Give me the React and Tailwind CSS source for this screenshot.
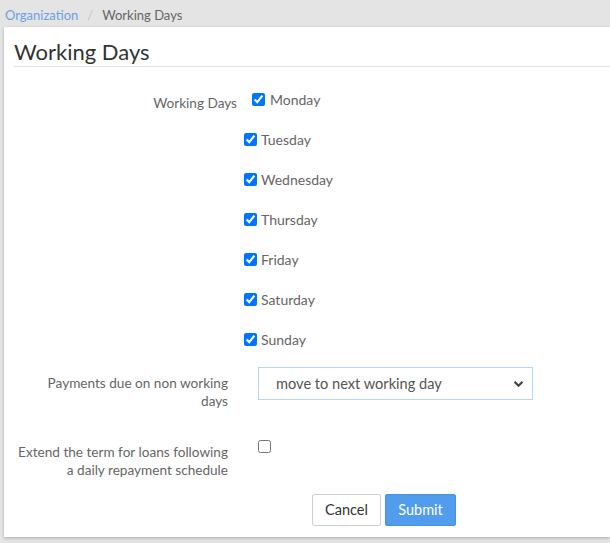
import React from "react"

const days = ["Tuesday", "Wednesday", "Thursday", "Friday", "Saturday", "Sunday"]

function Check({ checked }) {
    return (
        <input
            type="checkbox"
            defaultChecked={checked}
            className="m-0 w-[13px] h-[13px] shrink-0"
        />
    )
}

export default function App() {
    return (
        <div className="min-h-screen bg-[#e4e4e4] font-['Lato',sans-serif] overflow-hidden">
            {/* Breadcrumb */}
            <div className="h-[27px] flex items-center pt-[3px] px-[5px] text-[13px] leading-none">
                <span className="text-[#6f9fe3]">Organization</span>
                <span className="mx-[9px] text-[#c4c4c4]">/</span>
                <span className="text-[#666]">Working Days</span>
            </div>

            {/* Card */}
            <div className="ml-[4px] h-[510px] bg-white shadow-[0_1px_3px_rgba(0,0,0,0.25)]">
                <div className="ml-[10px] border-b border-[#e2e2e2]">
                    <h1 className="pt-[12px] pb-[1px] text-[22px] leading-[26px] text-[#333] font-normal">Working Days</h1>
                </div>

                {/* Working days */}
                <div className="mt-[22px] flex h-[20px]">
                    <div className="w-[233px] text-right text-[13.6px] leading-[18px] text-[#666] pt-[5px]">Working Days</div>
                    <label className="ml-[15px] h-[20px] flex items-center gap-[5px] text-[14px] text-[#666]">
                        <Check checked />
                        Monday
                    </label>
                </div>
                <div className="pl-[240px]">
                    {days.map((d) => (
                        <label key={d} className="mt-[20px] h-[20px] flex items-center gap-[4px] text-[14px] text-[#666]">
                            <Check checked />
                            {d}
                        </label>
                    ))}
                </div>

                {/* Payments */}
                <div className="mt-[18px] flex">
                    <div className="w-[224px] text-right text-[13.6px] leading-[18px] text-[#666] pt-[7px]">
                        Payments due on non working<br />days
                    </div>
                    <div className="ml-[30px] relative w-[275px] h-[33px]">
                        <select className="appearance-none w-full h-full border border-[#b6d6f6] bg-white pl-[17px] text-[14.6px] text-[#555] outline-none">
                            <option>move to next working day</option>
                        </select>
                        <svg className="absolute right-[9px] top-[13px] pointer-events-none" width="11" height="8" viewBox="0 0 11 8">
                            <path d="M1.5 1.8 L5.5 5.8 L9.5 1.8" fill="none" stroke="#444" strokeWidth="2.2" />
                        </svg>
                    </div>
                </div>

                {/* Extend term */}
                <div className="mt-[30px] flex">
                    <div className="w-[224px] text-right text-[13.6px] leading-[18px] text-[#666] pt-[3px]">
                        Extend the term for loans following<br />a daily repayment schedule
                    </div>
                    <div className="ml-[30px] flex items-start">
                        <Check />
                    </div>
                </div>

                {/* Buttons */}
                <div className="mt-[15px] flex gap-[4px] pl-[308px]">
                    <button className="w-[69px] h-[32px] border border-[#cfcfcf] rounded-[2px] bg-white text-[14.5px] text-[#333]">Cancel</button>
                    <button className="w-[71px] h-[32px] border border-[#4593e6] rounded-[2px] bg-[#519cec] text-[14.5px] text-white">Submit</button>
                </div>
            </div>
        </div>
    )
}
